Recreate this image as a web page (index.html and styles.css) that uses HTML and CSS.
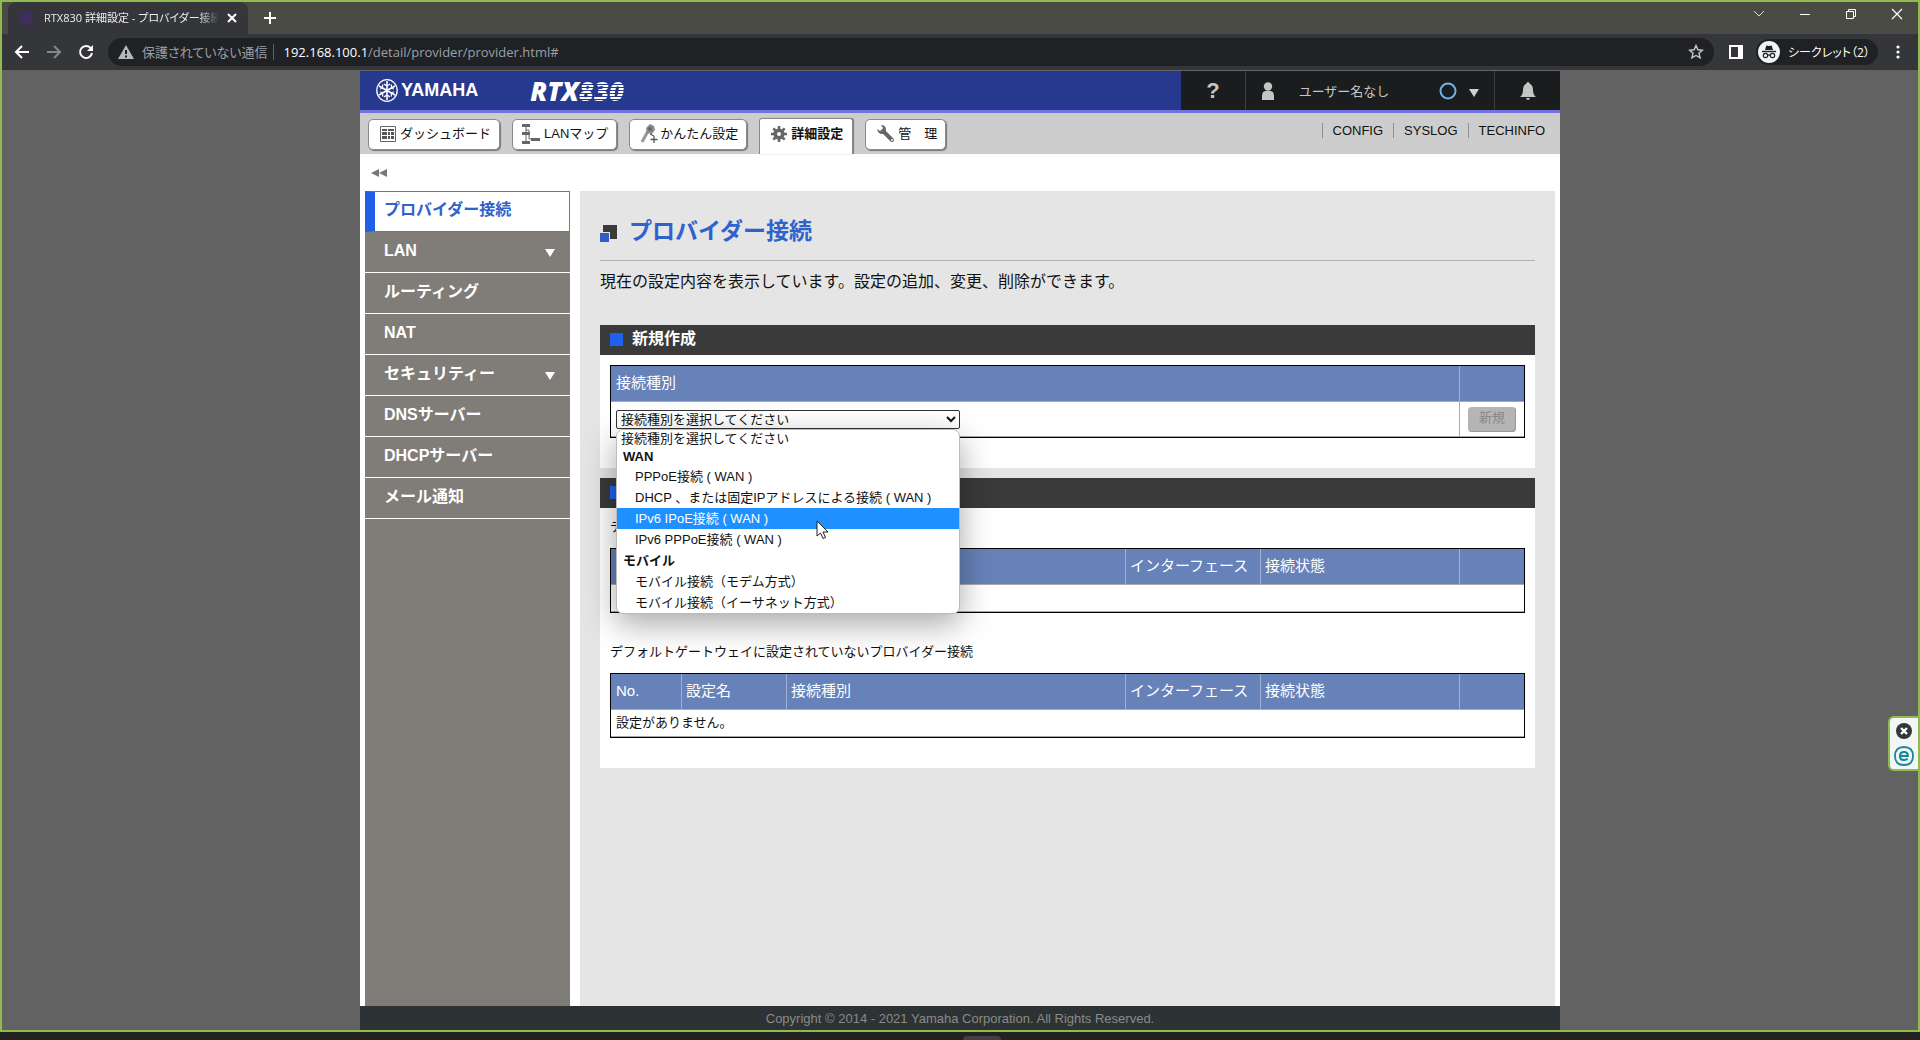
FILE: index.html
```html
<!DOCTYPE html>
<html lang="ja">
<head>
    <meta charset="UTF-8">
    <meta name="viewport" content="width=device-width, initial-scale=1.0">
    <title>RTX830 詳細設定 - プロバイダー接続</title>
    <link rel="stylesheet" href="styles.css">
</head>
<body>
    <div class="window">
        <!-- タブ -->
        <div class="tab-strip">
            <div class="tab">
                <span class="favicon"></span>
                <span class="tab-title">RTX830 詳細設定 - プロバイダー接続</span>
                <button class="icon-btn tab-close" aria-label="タブを閉じる">
                    <svg width="10" height="10" viewBox="0 0 10 10"><path d="M1 1l8 8M9 1l-8 8" stroke="#fff" stroke-width="2"/></svg>
                </button>
            </div>
            <button class="icon-btn new-tab" aria-label="新しいタブ">
                <svg width="12" height="12" viewBox="0 0 12 12"><path d="M6 0v12M0 6h12" stroke="#fff" stroke-width="2"/></svg>
            </button>
            <div class="window-controls">
                <button class="icon-btn" aria-label="タブを検索"><svg width="12" height="12" viewBox="0 0 12 12"><path d="M1 3l5 5 5-5" fill="none" stroke="#ddd"/></svg></button>
                <button class="icon-btn" aria-label="最小化"><svg width="12" height="12" viewBox="0 0 12 12"><path d="M1 6.500h10" stroke="#fff"/></svg></button>
                <button class="icon-btn" aria-label="元に戻す"><svg width="12" height="12" viewBox="0 0 12 12"><path d="M1.500 3.500h7v7h-7zM3.500 3.500v-2h7v7h-2" fill="none" stroke="#fff"/></svg></button>
                <button class="icon-btn" aria-label="閉じる"><svg width="12" height="12" viewBox="0 0 12 12"><path d="M1 1l10 10M11 1L1 11" stroke="#fff" stroke-width="1.200"/></svg></button>
            </div>
        </div>

        <!-- ツールバー -->
        <div class="toolbar">
            <div class="nav-buttons">
                <button class="icon-btn" aria-label="戻る"><svg width="16" height="16" viewBox="0 0 16 16"><path d="M15 8H2M8 2L2 8l6 6" fill="none" stroke="#fff" stroke-width="2"/></svg></button>
                <button class="icon-btn" aria-label="進む"><svg width="16" height="16" viewBox="0 0 16 16"><path d="M1 8h13M8 2l6 6-6 6" fill="none" stroke="#85868a" stroke-width="2"/></svg></button>
                <button class="icon-btn" aria-label="再読み込み"><svg width="16" height="16" viewBox="0 0 16 16"><path d="M13 4.500A6 6 0 1 0 14 9" fill="none" stroke="#fff" stroke-width="2"/><path d="M15 1v6H9z" fill="#fff"/></svg></button>
            </div>
            <div class="address-bar">
                <svg width="16" height="14" viewBox="0 0 16 14"><path d="M8 0l8 14H0z" fill="#b4b7bb"/><path d="M8 5v4M8 10.500v2" stroke="#202124" stroke-width="2"/></svg>
                <span class="insecure">保護されていない通信</span>
                <span class="url"><b>192.168.100.1</b>/detail/provider/provider.html#</span>
                <button class="icon-btn star" aria-label="ブックマーク"><svg width="16" height="16" viewBox="0 0 16 16"><path d="M8 1.500l1.900 4.300 4.600.4-3.500 3.100 1.100 4.600L8 11.500l-4.100 2.400L5 9.300 1.500 6.200l4.600-.4z" fill="none" stroke="#c8cacd" stroke-width="1.400"/></svg></button>
            </div>
            <button class="icon-btn side-panel" aria-label="サイドパネル"><svg width="14" height="14" viewBox="0 0 14 14"><path d="M1 1h12v12H1z" fill="none" stroke="#fff" stroke-width="2"/><path d="M9 1h4v12H9z" fill="#fff"/></svg></button>
            <button class="incognito">
                <svg width="22" height="22" viewBox="0 0 22 22"><circle cx="11" cy="11" r="11" fill="#f1f3f4"/><path d="M7 9l1.300-4.500 2.700.6 2.700-.6L15 9z" fill="#202124"/><path d="M4 10.500h14" stroke="#202124" stroke-width="1.400"/><g fill="none" stroke="#202124" stroke-width="1.200"><circle cx="7.500" cy="14.500" r="2.200"/><circle cx="14.500" cy="14.500" r="2.200"/><path d="M9.700 14.200q1.300-.8 2.600 0"/></g></svg>
                シークレット（2）
            </button>
            <button class="icon-btn menu" aria-label="メニュー"><svg width="4" height="16" viewBox="0 0 4 16" fill="#fff"><circle cx="2" cy="3" r="1.600"/><circle cx="2" cy="8" r="1.600"/><circle cx="2" cy="13" r="1.600"/></svg></button>
        </div>

        <div class="viewport">
            <div class="page">
                <header class="header">
                    <div class="brand">
                        <svg class="emblem" width="22" height="23" viewBox="0 0 22 23" fill="none" stroke="#fff"><ellipse cx="11" cy="11.500" rx="10.200" ry="10.800" stroke-width="1.300"/><path d="M11 2v19M3 7l16 9M19 7L3 16" stroke-width="1.600"/><path d="M8 5q3 3 6 0M8 18q3-3 6 0M4 10q3.500-.3 2.500-4.500M18 10q-3.500-.3-2.500-4.500M4 13q3.500.3 2.500 4.500M18 13q-3.500.3-2.500 4.500" stroke-width="1.200"/></svg>
                        <span class="maker">YAMAHA</span>
                        <span class="model">RTX<span class="striped">830</span></span>
                    </div>
                    <a class="head-cell help" href="#" aria-label="ヘルプ">?</a>
                    <div class="head-cell user">
                        <svg width="14" height="18" viewBox="0 0 14 18" fill="#c4c6c6"><circle cx="7" cy="4.500" r="4.200"/><path d="M1 18v-4q0-5 4-5h4q4 0 4 5v4z"/></svg>
                        <span class="user-name">ユーザー名なし</span>
                        <svg width="18" height="18" viewBox="0 0 18 18"><circle cx="9" cy="9" r="7.500" fill="none" stroke="#6fb4e4" stroke-width="2"/></svg>
                        <svg class="user-arrow" width="10" height="8" viewBox="0 0 10 8"><path d="M0 0h10L5 8z" fill="#d0d2d2"/></svg>
                    </div>
                    <a class="head-cell bell" href="#" aria-label="通知"><svg width="16" height="18" viewBox="0 0 16 18" fill="#c4c6c6"><path d="M8 0q1.500 0 1.500 1.500Q13 3 13 8q0 4.500 3 7H0q3-2.500 3-7 0-5 3.500-6.500Q6.500 0 8 0zM6 16h4q-.5 2-2 2t-2-2z"/></svg></a>
                </header>

                <nav class="tabs">
                    <a class="nav-tab dashboard" href="#"><svg width="16" height="16" viewBox="0 0 16 16"><path d="M.5.5h15v15H.5z" fill="#fff" stroke="#666"/><path d="M2 3h5v2H2zM2 6h5v3H2zM2 10h5v3H2zM8 3h6v2H8zM8 6h2v3H8zM11 6h3v3h-3zM8 10h2v3H8zM11 10h3v3h-3z" fill="#555"/></svg>ダッシュボード</a>
                    <a class="nav-tab lan" href="#"><svg width="18" height="20" viewBox="0 0 18 20" fill="#666"><path d="M0 0h8v3H0zM0 8h8v3H0zM0 17h8v3H0zM9 14h9v3H9z"/><path d="M4 2v16M4 6h3v9h4" fill="none" stroke="#666"/></svg>LANマップ</a>
                    <a class="nav-tab easy" href="#"><svg width="18" height="20" viewBox="0 0 18 20"><path d="M8 7L2 18" stroke="#999" stroke-width="3"/><path d="M10 0l4 2 1 4-3 4-5-1-1-5z" fill="#8a8a8a"/><circle cx="10" cy="5" r="2" fill="#666"/><path d="M10 10l4 2M14 12v7M10.500 15.500h7" stroke="#555" stroke-width="1.300"/></svg>かんたん設定</a>
                    <a class="nav-tab active" href="#"><svg width="16" height="16" viewBox="0 0 16 16"><g stroke="#666" stroke-width="2.600"><path d="M8 0v16M0 8h16M2.300 2.300l11.400 11.400M13.700 2.300L2.300 13.700"/></g><circle cx="8" cy="8" r="5.600" fill="#666"/><circle cx="8" cy="8" r="2" fill="#fff"/></svg>詳細設定</a>
                    <a class="nav-tab admin" href="#"><svg width="18" height="18" viewBox="0 0 18 18"><path d="M6 6l9 9" stroke="#666" stroke-width="4" stroke-linecap="round"/><path d="M4 0q5 0 5 5 0 4-4 4Q1 9 0 4l3 2 2-1 1-2z" fill="#666"/><circle cx="15" cy="15" r="1" fill="#fff"/></svg>管　理</a>
                    <div class="logs">
                        <a href="#">CONFIG</a>
                        <a href="#">SYSLOG</a>
                        <a href="#">TECHINFO</a>
                    </div>
                </nav>

                <button class="icon-btn collapse" aria-label="メニューを閉じる"><svg width="16" height="8" viewBox="0 0 16 8"><path d="M8 0v8L0 4zM16 0v8L8 4z" fill="#777"/></svg></button>

                <div class="columns">
                    <ul class="sidebar">
                        <li><a class="current" href="#">プロバイダー接続</a></li>
                        <li><a class="has-sub" href="#">LAN</a></li>
                        <li><a href="#">ルーティング</a></li>
                        <li><a href="#">NAT</a></li>
                        <li><a class="has-sub" href="#">セキュリティー</a></li>
                        <li><a href="#">DNSサーバー</a></li>
                        <li><a href="#">DHCPサーバー</a></li>
                        <li><a href="#">メール通知</a></li>
                    </ul>

                    <main class="main">
                        <h1><svg width="17" height="17" viewBox="0 0 17 17"><path d="M3 0h14v14H3z" fill="#3a3a3a"/><path d="M-1 7h11v11H-1z" fill="#e5e5e5"/><path d="M0 8h9v9H0z" fill="#2f5fc4"/></svg>プロバイダー接続</h1>
                        <p class="lead">現在の設定内容を表示しています。設定の追加、変更、削除ができます。</p>

                        <section class="panel">
                            <h2>新規作成</h2>
                            <div class="panel-body">
                                <table class="grid">
                                    <thead>
                                        <tr><th><label for="connType">接続種別</label></th><th class="col-action"></th></tr>
                                    </thead>
                                    <tbody>
                                        <tr class="form-row">
                                            <td>
                                                <div class="dropdown">
                                                    <select id="connType">
                                                        <option>接続種別を選択してください</option>
                                                    </select>
                                                    <ul class="dropdown-list">
                                                        <li class="short first">接続種別を選択してください</li>
                                                        <li class="short group">WAN</li>
                                                        <li>PPPoE接続 ( WAN )</li>
                                                        <li>DHCP 、または固定IPアドレスによる接続 ( WAN )</li>
                                                        <li class="selected">IPv6 IPoE接続 ( WAN )</li>
                                                        <li>IPv6 PPPoE接続 ( WAN )</li>
                                                        <li class="group">モバイル</li>
                                                        <li>モバイル接続（モデム方式）</li>
                                                        <li>モバイル接続（イーサネット方式）</li>
                                                    </ul>
                                                    <svg class="cursor" width="13" height="20" viewBox="0 0 13 20"><path d="M1 1v15l3.500-3 2.500 5.500 2.500-1L7 12h5z" fill="#fff" stroke="#222"/></svg>
                                                </div>
                                            </td>
                                            <td class="action"><button class="create" disabled>新規</button></td>
                                        </tr>
                                    </tbody>
                                </table>
                            </div>
                        </section>

                        <section class="panel">
                            <h2>設定の一覧</h2>
                            <div class="panel-body">
                                <p class="caption">デフォルトゲートウェイに設定されているプロバイダー接続</p>
                                <table class="grid">
                                    <thead>
                                        <tr><th class="col-no">No.</th><th class="col-name">設定名</th><th>接続種別</th><th class="col-if">インターフェース</th><th class="col-state">接続状態</th><th class="col-action"></th></tr>
                                    </thead>
                                    <tbody>
                                        <tr><td colspan="6">設定がありません。</td></tr>
                                    </tbody>
                                </table>
                                <p class="caption second">デフォルトゲートウェイに設定されていないプロバイダー接続</p>
                                <table class="grid">
                                    <thead>
                                        <tr><th class="col-no">No.</th><th class="col-name">設定名</th><th>接続種別</th><th class="col-if">インターフェース</th><th class="col-state">接続状態</th><th class="col-action"></th></tr>
                                    </thead>
                                    <tbody>
                                        <tr><td colspan="6">設定がありません。</td></tr>
                                    </tbody>
                                </table>
                            </div>
                        </section>
                    </main>
                </div>

                <footer class="footer">Copyright © 2014 - 2021 Yamaha Corporation. All Rights Reserved.</footer>
            </div>
        </div>

        <!-- 画面端のウィジェット -->
        <div class="widget">
            <button class="icon-btn" aria-label="閉じる"><svg width="16" height="16" viewBox="0 0 16 16"><circle cx="8" cy="8" r="8" fill="#33373b"/><path d="M5 5l6 6M11 5l-6 6" stroke="#fff" stroke-width="2.400"/></svg></button>
            <button class="icon-btn" aria-label="保護"><svg width="20" height="20" viewBox="0 0 20 20" fill="none" stroke="#12889a"><path d="M10 1q9 0 9 9t-9 9-9-9 9-9z" stroke-width="1.800"/><path d="M6.500 10h7.300q0-4-3.800-4-4 0-4 4.200 0 3.800 4 3.800 2.500 0 3.500-1.300" stroke-width="2.200"/></svg></button>
        </div>
    </div>
    <div class="taskbar"><span></span></div>
</body>
</html>
```

FILE: styles.css
```css
* {
    box-sizing: border-box;
}
body {
    margin: 0;
    min-height: 100vh;
    display: flex;
    flex-direction: column;
    font-family: "Liberation Sans", "Noto Sans CJK JP", sans-serif;
    font-size: 13px;
    color: #111;
    background: #22241f;
}
a {
    color: inherit;
    text-decoration: none;
}
ul {
    list-style: none;
    margin: 0;
    padding: 0;
}
svg {
    display: block;
    flex: none;
}
.icon-btn {
    display: flex;
    align-items: center;
    justify-content: center;
    padding: 0;
    border: none;
    background: none;
}
.window {
    position: relative;
    flex: 1;
    display: flex;
    flex-direction: column;
    border: 2px solid #8fbc4f;
}

/* browser */
.tab-strip, .toolbar {
    font-family: "Open Sans", "Noto Sans CJK JP", sans-serif;
    font-feature-settings: "palt";
}
.tab-strip {
    display: flex;
    align-items: center;
    height: 32px;
    padding-left: 6px;
    background: #4a4b45;
}
.tab {
    display: flex;
    align-items: center;
    width: 240px;
    height: 32px;
    padding: 0 11px;
    border-radius: 8px 8px 0 0;
    background: #35363a;
}
.favicon {
    width: 14px;
    height: 14px;
    margin-right: 11px;
    border-radius: 50%;
    background: #432c62;
    filter: blur(2px);
}
.tab-title {
    flex: 1;
    overflow: hidden;
    white-space: nowrap;
    font-size: 11px;
    line-height: 20px;
    color: #eee;
    -webkit-mask-image: linear-gradient(90deg, #000 88%, transparent);
    mask-image: linear-gradient(90deg, #000 88%, transparent);
}
.tab-close {
    margin-left: 8px;
}
.new-tab {
    margin-left: 16px;
}
.window-controls {
    display: flex;
    gap: 34px;
    margin-left: auto;
    padding: 0 15px 8px 0;
}
.toolbar {
    display: flex;
    align-items: center;
    height: 36px;
    padding: 0 18px 0 12px;
    background: #35363a;
}
.nav-buttons {
    display: flex;
    gap: 16px;
    margin-right: 14px;
}
.address-bar {
    flex: 1;
    display: flex;
    align-items: center;
    height: 28px;
    padding: 0 10px;
    border-radius: 14px;
    background: #202124;
    font-size: 13px;
    line-height: 20px;
}
.insecure {
    margin-left: 8px;
    padding-right: 6px;
    border-right: 1px solid #5f6368;
    line-height: 16px;
    color: #9aa0a6;
}
.url {
    margin-left: 9px;
    color: #9aa0a6;
}
.url b {
    font-weight: normal;
    color: #fff;
}
.star {
    margin-left: auto;
}
.side-panel {
    margin: 0 13px 0 15px;
}
.incognito {
    display: flex;
    align-items: center;
    gap: 8px;
    width: 122px;
    height: 26px;
    padding: 0 2px;
    border: none;
    border-radius: 13px;
    background: #202124;
    color: #fff;
    font: inherit;
    font-size: 12px;
    white-space: nowrap;
}
.menu {
    margin-left: 18px;
}

/* page */
.viewport {
    flex: 1;
    display: flex;
    justify-content: center;
    padding-top: 1px;
    background: #626262;
}
.page {
    display: flex;
    flex-direction: column;
    width: 100%;
    max-width: 1200px;
    background: #fff;
}
.header {
    display: flex;
    height: 42px;
    border-bottom: 3px solid #7272dc;
    background: #1a1c1d;
    color: #c4c6c6;
}
.brand {
    flex: 1;
    display: flex;
    align-items: center;
    padding-left: 16px;
    background: #26398f;
    color: #fff;
    font-weight: bold;
}
.maker {
    margin: 0 52px 0 3px;
    font-size: 18px;
}
.model {
    font-family: "Open Sans", sans-serif;
    font-size: 26px;
    line-height: 36px;
    font-weight: 800;
    font-style: italic;
}
.striped {
    background: repeating-linear-gradient(#fff 0 2px, #26398f 2px 3px);
    -webkit-background-clip: text;
    background-clip: text;
    color: transparent;
}
.head-cell {
    display: flex;
    align-items: center;
    justify-content: center;
}
.help {
    width: 64px;
    font-size: 22px;
    font-weight: bold;
}
.user {
    width: 250px;
    border: 1px solid #3c3e3f;
    border-width: 0 1px;
}
.user-name {
    margin: 0 50px 0 24px;
}
.user-arrow {
    margin: 4px 0 0 12px;
}
.bell {
    width: 65px;
}
.tabs {
    display: flex;
    align-items: flex-start;
    gap: 12px;
    height: 41px;
    padding: 5px 10px 0 8px;
    background: #cdcdcd;
}
.nav-tab {
    display: flex;
    align-items: center;
    justify-content: center;
    gap: 4px;
    height: 31px;
    margin-top: 1px;
    padding: 0 8px 2px 9px;
    border: 1px solid #8a8a8a;
    border-radius: 5px;
    background: #fff;
    box-shadow: 1px 1px 1px #777;
    line-height: 20px;
    white-space: nowrap;
}
.nav-tab.dashboard {
    padding-left: 11px;
}
.nav-tab.easy {
    gap: 2px;
    padding-left: 10px;
}
.nav-tab.active {
    height: 36px;
    margin-top: 0;
    padding: 0 9px 6px 11px;
    border-bottom: none;
    border-radius: 3px 3px 0 0;
    box-shadow: 1px 0 1px #777;
    font-weight: bold;
}
.nav-tab.admin {
    gap: 3px;
    padding-left: 11px;
}
.logs {
    display: flex;
    gap: 10px;
    margin-left: auto;
    padding: 5px 5px 0 0;
    line-height: 15px;
}
.logs a {
    padding-left: 10px;
    border-left: 1px solid #8e8e8e;
}
.collapse {
    width: 38px;
    height: 37px;
}
.columns {
    flex: 1;
    display: flex;
    gap: 10px;
    padding: 0 5px;
}
.sidebar {
    width: 205px;
    background: #807d78;
    color: #fff;
    font-size: 16px;
    font-weight: bold;
}
.sidebar a {
    display: flex;
    align-items: center;
    justify-content: space-between;
    height: 41px;
    padding: 0 15px 2px 19px;
    border-bottom: 1px solid #fff;
    line-height: 24px;
}
.sidebar .current {
    padding: 0 15px 4px 9px;
    border: 1px solid #777;
    border-left: 10px solid #2060e8;
    background: #fff;
    color: #2f62cc;
}
.sidebar .has-sub::after {
    content: "";
    margin-top: 3px;
    border: 5px solid transparent;
    border-top: 8px solid #fff;
    border-bottom: none;
}
.main {
    flex: 1;
    min-width: 0;
    padding: 20px 20px 0;
    background: #e5e5e5;
}
h1 {
    display: flex;
    align-items: center;
    gap: 12px;
    height: 50px;
    margin: 0 0 7px;
    padding-bottom: 9px;
    border-bottom: 1px solid #b0b0b0;
    color: #2f62cc;
    font-size: 23px;
    line-height: 32px;
}
h1 svg {
    margin-top: 4px;
}
.lead {
    margin: 0 0 30px;
    font-size: 16px;
    line-height: 27px;
}
.panel {
    margin-bottom: 10px;
    background: #fff;
}
h2 {
    display: flex;
    align-items: center;
    gap: 9px;
    height: 30px;
    margin: 0;
    padding: 0 10px 2px;
    background: #3a3a3a;
    color: #fff;
    font-size: 16px;
    line-height: 24px;
}
h2::before {
    content: "";
    width: 13px;
    height: 13px;
    background: #2060f0;
}
.panel-body {
    padding: 10px 10px 30px;
}
.caption {
    margin: 0 0 12px;
    line-height: 18px;
}
.caption.second {
    margin-top: 30px;
}
.grid {
    width: 100%;
    border: 1px solid #000;
    border-spacing: 0;
    table-layout: fixed;
    line-height: 20px;
}
.grid th {
    height: 36px;
    padding: 0 5px 2px;
    border-bottom: 1px solid #aaa;
    background: #6682b8;
    color: #fff;
    font-size: 15px;
    font-weight: normal;
    text-align: left;
}
.grid th + th {
    padding-left: 4px;
    border-left: 1px solid #9fb0d6;
}
.grid td {
    height: 27px;
    padding: 0 5px;
    border-bottom: 1px solid #aaa;
}
.grid .form-row td {
    height: 35px;
}
.col-no {
    width: 70px;
}
.col-name {
    width: 105px;
}
.col-if {
    width: 135px;
}
.col-state {
    width: 199px;
}
.col-action {
    width: 65px;
}
.grid .action {
    padding: 0 8px;
    border-left: 1px solid #aaa;
}
.create {
    display: block;
    width: 50px;
    max-width: 100%;
    height: 25px;
    padding: 0 0 2px;
    border: none;
    border-radius: 4px;
    background: #b5b5b5;
    box-shadow: inset -1px -1px #999;
    color: #888;
    font: inherit;
    line-height: 20px;
}

/* list of connection types */
.dropdown {
    position: relative;
    width: 344px;
    max-width: 100%;
}
.dropdown select {
    display: block;
    width: 100%;
    height: 19px;
    padding: 0;
    border: 1px solid #333;
    border-radius: 2px;
    background: #fff;
    color: #111;
    font: inherit;
    line-height: 17px;
}
.dropdown-list {
    position: absolute;
    top: 100%;
    left: 0;
    z-index: 1;
    width: 100%;
    border: 1px solid #bbb;
    border-radius: 7px;
    background: #fff;
    box-shadow: 0 10px 32px rgba(0, 0, 0, 0.35);
    overflow: hidden;
}
.dropdown-list li {
    padding-left: 18px;
    line-height: 21px;
    white-space: nowrap;
}
.dropdown-list .short {
    line-height: 18px;
}
.dropdown-list .first {
    padding-left: 4px;
}
.dropdown-list .group {
    padding-left: 6px;
    font-weight: bold;
}
.dropdown-list .selected {
    background: #1e90ff;
    color: #fff;
}
.cursor {
    position: absolute;
    top: 110px;
    left: 200px;
    z-index: 2;
}
.footer {
    height: 24px;
    background: #2d3334;
    color: #8a8a8a;
    line-height: 26px;
    text-align: center;
}
.widget {
    position: absolute;
    right: 0;
    top: 714px;
    display: flex;
    flex-direction: column;
    align-items: center;
    gap: 7px;
    width: 30px;
    height: 55px;
    padding-top: 5px;
    border: 2px solid #8fbc4f;
    border-right: none;
    border-radius: 6px 0 0 6px;
    background: #f4f6f6;
}
.taskbar {
    display: flex;
    justify-content: center;
    align-items: flex-end;
    height: 8px;
    padding-left: 44px;
    background: #22231f;
}
.taskbar span {
    width: 38px;
    height: 4px;
    border-radius: 4px 4px 0 0;
    background: #443f45;
}
```
